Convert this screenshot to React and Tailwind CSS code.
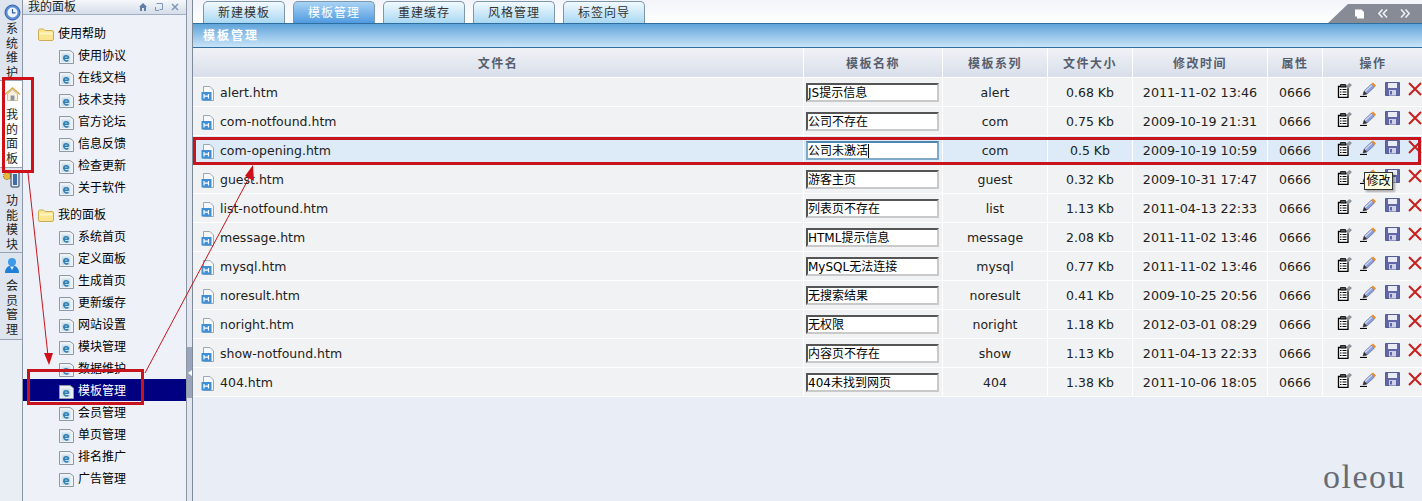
const cjk = "font-['Tahoma','DejaVu_Sans','Noto_Sans_CJK_SC',sans-serif]";

const railItems = [
  { key: 'clock', label: '系统维护', className: 'h-[81px] bg-[#dfe5ef]', textClass: 'pt-0' },
  { key: 'home', label: '我的面板', className: 'h-[87px] bg-white pt-[3px]', textClass: 'pt-[4px]' },
  { key: 'modules', label: '功能模块', className: 'h-[85px] bg-[#dfe5ef]', textClass: 'pt-[4px]' },
  { key: 'user', label: '会员管理', className: 'h-[87px] bg-[#dfe5ef]', textClass: 'pt-[4px]' },
];

const helpLinks = ['使用协议', '在线文档', '技术支持', '官方论坛', '信息反馈', '检查更新', '关于软件'];
const panelLinks = ['系统首页', '定义面板', '生成首页', '更新缓存', '网站设置', '模块管理', '数据维护', '模板管理', '会员管理', '单页管理', '排名推广', '广告管理'];
const tabs = ['新建模板', '模板管理', '重建缓存', '风格管理', '标签向导'];

const rows = [
  ['alert.htm', 'JS提示信息', 'alert', '0.68 Kb', '2011-11-02 13:46'],
  ['com-notfound.htm', '公司不存在', 'com', '0.75 Kb', '2009-10-19 21:31'],
  ['com-opening.htm', '公司未激活', 'com', '0.5 Kb', '2009-10-19 10:59'],
  ['guest.htm', '游客主页', 'guest', '0.32 Kb', '2009-10-31 17:47'],
  ['list-notfound.htm', '列表页不存在', 'list', '1.13 Kb', '2011-04-13 22:33'],
  ['message.htm', 'HTML提示信息', 'message', '2.08 Kb', '2011-11-02 13:46'],
  ['mysql.htm', 'MySQL无法连接', 'mysql', '0.77 Kb', '2011-11-02 13:46'],
  ['noresult.htm', '无搜索结果', 'noresult', '0.41 Kb', '2009-10-25 20:56'],
  ['noright.htm', '无权限', 'noright', '1.18 Kb', '2012-03-01 08:29'],
  ['show-notfound.htm', '内容页不存在', 'show', '1.13 Kb', '2011-04-13 22:33'],
  ['404.htm', '404未找到网页', '404', '1.38 Kb', '2011-10-06 18:05'],
];

const gridCols = 'grid grid-cols-[611px_139px_105px_85px_135px_55px_100px]';

function RailIcon({ name }) {
  if (name === 'clock') {
    return (
      <svg width="17" height="17" viewBox="0 0 17 17">
        <circle cx="8.5" cy="8.5" r="7.5" fill="#5d8fd6" stroke="#2f5ea8" />
        <circle cx="8.5" cy="8.5" r="5" fill="#eef4fc" />
        <path d="M8.5 5v3.8h3" fill="none" stroke="#2f5ea8" strokeWidth="1.2" />
      </svg>
    );
  }
  if (name === 'home') {
    return (
      <svg width="17" height="17" viewBox="0 0 17 17">
        <path d="M1 8.5 8.5 2 16 8.5" fill="none" stroke="#d9a94e" strokeWidth="1.6" />
        <path d="M3.5 8 8.5 3.8 13.5 8v6.5h-10z" fill="#f6f0dc" stroke="#b9a678" strokeWidth=".7" />
        <rect x="6.6" y="9.5" width="3.8" height="5" fill="#8a95a3" />
      </svg>
    );
  }
  if (name === 'modules') {
    return (
      <svg width="20" height="20" viewBox="0 0 20 20">
        <circle cx="5" cy="6" r="3.6" fill="#e6b93c" stroke="#8a6d1e" strokeDasharray="1.4 1" />
        <rect x="9" y="2" width="8" height="15" rx="1" fill="#dfe8f3" stroke="#26384f" />
        <rect x="11" y="4" width="4" height="11" fill="#3f6ea6" />
      </svg>
    );
  }
  return (
    <svg width="16" height="17" viewBox="0 0 16 17">
      <circle cx="8" cy="5" r="4" fill="#3d9be8" />
      <path d="M1 16c0-5 3-7.500 7-7.500s7 2.500 7 7.500z" fill="#1e7fd6" />
      <path d="M6 9.500 8 13l2-3.500z" fill="#e8f4fd" />
    </svg>
  );
}

function FolderIcon() {
  return (
    <svg width="16" height="13" viewBox="0 0 16 13" className="shrink-0">
      <path d="M.5 2.500Q.5 1 2 1h3.500L7 2.500h7Q15.500 2.500 15.500 4v7q0 1.500-1.500 1.500H2Q.5 12.500.5 11z" fill="#fbe68f" stroke="#c9ad55" />
      <path d="M1.500 4.500h13v2h-13z" fill="#fff5c2" />
    </svg>
  );
}

function PageIcon() {
  return (
    <svg width="15" height="15" viewBox="0 0 15 15" className="shrink-0">
      <path d="M.5 1.500h10.500l3.500 2.500v10.500H.5z" fill="#eef2f5" stroke="#8d99a3" />
      <rect x="2.500" y="4.500" width="9" height="8.500" fill="#cfe1ee" />
      <path d="M9.700 9.300H4.800c0-3.300 4.600-3.300 4.900 0 M9.400 11.300c-1.500 1.200-4.400.7-4.600-2" fill="none" stroke="#2e7fb0" strokeWidth="1.500" />
    </svg>
  );
}

function HtmIcon() {
  return (
    <svg width="14" height="15" viewBox="0 0 14 15" className="shrink-0">
      <path d="M2.500.5h6.500l3.500 3.500v10.500h-10z" fill="#f6f8fb" stroke="#9aa7b5" />
      <rect x=".5" y="6" width="10" height="8.500" fill="#3f8fd6" />
      <path d="M3 8v4.500M7.500 8v4.500M3 10.200h4.500" stroke="#fff" strokeWidth="1.200" />
    </svg>
  );
}

function TemplateIcon() {
  return (
    <svg width="15" height="15" viewBox="0 0 15 15" className="mt-[1px]">
      <path d="M1.500 3.500h9.500v11H1.500z" fill="#fff" stroke="#000" strokeWidth="1.300" />
      <path d="M3 6.500h1.500M5.500 6.500h4M3 9h1.500M5.500 9h4M3 11.500h1.500M5.500 11.500h4" stroke="#000" strokeWidth="1.200" />
      <path d="M3.500 4V1.500h5L9 4z" fill="#555" stroke="#000" strokeWidth=".8" />
      <path d="M9 3l3.500-3 2.500 2-4 4z" fill="#8d949c" />
    </svg>
  );
}

function PencilIcon() {
  return (
    <svg width="17" height="15" viewBox="0 0 17 15">
      <path d="M0 14.500h7" stroke="#000" strokeWidth="1.200" />
      <path d="M3 13l1.200-4L11.500 2l3 3L7 12z" fill="#8f9fd8" stroke="#55659f" strokeWidth=".7" />
      <path d="M4.800 9l6.700-6.200.8.800L5.500 10z" fill="#d4dbf4" />
      <path d="M11.500 2 13 .5l3 3L14.500 5z" fill="#f08a24" />
      <path d="M3 13l1.200-4L7 12z" fill="#3a2e22" />
    </svg>
  );
}

function SaveIcon() {
  return (
    <svg width="15" height="14" viewBox="0 0 15 14">
      <path d="M.5.500h14v13H.5z" fill="#6066a6" stroke="#565c98" />
      <rect x="3" y="1" width="9" height="5" fill="#e9ebf6" />
      <rect x="4" y="8" width="7" height="5.500" fill="#cfd2e6" />
      <rect x="5" y="9" width="2" height="3.500" fill="#6066a6" />
    </svg>
  );
}

function DeleteIcon() {
  return (
    <svg width="14" height="14" viewBox="0 0 14 14" className="shrink-0">
      <path d="M1 1l12 12M13 1 1 13" stroke="#c8201c" strokeWidth="2" />
    </svg>
  );
}

function TreeGroup({ title, links, className }) {
  return (
    <div className={className}>
      <div className="flex h-[22px] items-center gap-[4px] pl-[15px] pt-[2px] text-black">
        <FolderIcon />
        <span>{title}</span>
      </div>
      {links.map((link) => (
        <div
          key={link}
          className={`flex h-[22px] items-center gap-[4px] pl-[36px] pt-[2px] ${link === '模板管理' ? 'bg-[#000080] text-white' : 'text-black'}`}
        >
          <PageIcon />
          <span>{link}</span>
        </div>
      ))}
    </div>
  );
}

function Row({ row, active }) {
  const [file, name, series, size, time] = row;
  return (
    <div className={`${gridCols} h-[29px] border-b border-white text-[12.5px] text-[#222] ${active ? 'bg-[#dcebf7]' : 'bg-[#f1f2f3]'}`}>
      <div className="flex items-center gap-[5px] border-r border-white pl-[8px]">
        <span className="mt-[3px]"><HtmIcon /></span>
        <span className="pt-[2px]">{file}</span>
      </div>
      <div className="flex items-center border-r border-white pl-[2px]">
        <div
          className={`h-[19px] w-[133px] overflow-hidden bg-white text-[12px] leading-[16px] text-black ${active ? 'border-2 border-[#7fa9c9] border-t-[#4f86ad]' : 'border-2 border-[#c9c9c9] border-t-[#555] border-l-[#555]'}`}
        >
          {name}{active && <span className="border-r border-black" />}
        </div>
      </div>
      <div className="flex items-center justify-center border-r border-white pt-[2px]">{series}</div>
      <div className="flex items-center justify-center border-r border-white pt-[2px]">{size}</div>
      <div className="flex items-center justify-center border-r border-white pt-[2px] text-[12.7px]">{time}</div>
      <div className="flex items-center justify-center border-r border-white pt-[2px]">0666</div>
      <div className="flex items-start gap-[8px] pl-[14px] pt-[4px]">
        <TemplateIcon />
        <PencilIcon />
        <SaveIcon />
        <DeleteIcon />
      </div>
    </div>
  );
}

export default function App() {
  const headers = ['文件名', '模板名称', '模板系列', '文件大小', '修改时间', '属性', '操作'];

  return (
    <div className={`relative flex h-[501px] w-[1422px] overflow-hidden bg-[#e9eef6] text-[12px] ${cjk}`}>
      {/* left rail */}
      <div className="flex w-[22px] shrink-0 flex-col bg-[#e9edf4]">
        {railItems.map((item) => (
          <div key={item.key} className={`flex flex-col items-center border-b border-[#98a4b5] pl-[2px] pt-[2px] ${item.className}`}>
            <div className="flex h-[20px] items-center justify-center"><RailIcon name={item.key} /></div>
            <div className={`flex w-[14px] flex-col items-center text-[12px] leading-[14.500px] text-[#222] ${item.textClass}`}>
              {item.label.split('').map((ch, i) => <span key={i}>{ch}</span>)}
            </div>
          </div>
        ))}
      </div>

      {/* tree */}
      <div className="flex w-[165px] shrink-0 flex-col border-x border-[#8b96a6] bg-[#eff1f9]">
        <div className="flex h-[15px] items-center justify-between border-b border-[#9fb0c6] bg-gradient-to-b from-[#f5f7fb] to-[#d5dde9] pl-[5px] pr-[7px] text-[#222]">
          <span>我的面板</span>
          <div className="flex items-center gap-[8px]">
            <svg width="8" height="8" viewBox="0 0 8 8"><path d="M0 4 4 0l4 4H7v4H5V5H3v3H1V4z" fill="#5f7fa8" /></svg>
            <svg width="8" height="8" viewBox="0 0 8 8"><path d="M1.500.500h6v6h-3M.500 4v3.500H4" fill="none" stroke="#7e97b8" /></svg>
            <svg width="8" height="8" viewBox="0 0 8 8"><path d="M1 1l6 6M7 1 1 7" stroke="#7e97b8" strokeWidth="1.500" /></svg>
          </div>
        </div>
        <TreeGroup title="使用帮助" links={helpLinks} className="pt-[7px]" />
        <TreeGroup title="我的面板" links={panelLinks} className="pt-[5px]" />
      </div>

      {/* splitter */}
      <div className="flex w-[5px] shrink-0 flex-col bg-[#e3e6ee] pt-[347px]">
        <div className="flex h-[51px] items-center justify-center bg-[#9aa5bb]">
          <div className="h-0 w-0 border-y-[3px] border-r-[4px] border-y-transparent border-r-white" />
        </div>
      </div>

      {/* main */}
      <div className="flex min-w-0 flex-1 flex-col border-l border-[#7f8a99]">
        <div className="relative flex h-[23px] items-end gap-[8px] bg-gradient-to-b from-[#f3f4fa] to-white pl-[10px]">
          {tabs.map((tab) => (
            <div
              key={tab}
              className={`flex h-[22px] w-[82px] items-center justify-center rounded-t-[5px] border border-b-0 border-[#7d97ac] text-[12px] tracking-[1px] ${tab === '模板管理' ? 'bg-gradient-to-b from-[#a8d3f3] to-[#4f9ae0] text-white' : 'bg-gradient-to-b from-[#f2f9fe] to-[#a9d8f3] text-[#333]'}`}
            >
              {tab}
            </div>
          ))}
          <div className="absolute bottom-0 right-0 flex h-[19px] w-[94px] items-center bg-[#868b96] pl-[27px] [clip-path:polygon(20px_0,100%_0,100%_100%,0_100%)]">
            <svg width="9" height="10" viewBox="0 0 9 10">
              <path d="M0 .5h6.500L9 3v6.500H2v-2H0z" fill="#fff" />
            </svg>
            <svg width="10" height="9" viewBox="0 0 10 9" className="ml-[14px]">
              <path d="M4.500 .5.800 4.500l3.700 4M9 .5 5.300 4.500 9 8.500" fill="none" stroke="#eef0f5" strokeWidth="1.600" />
            </svg>
            <svg width="10" height="9" viewBox="0 0 10 9" className="ml-[12px]">
              <path d="M1 .5l3.700 4-3.700 4M5.500 .5l3.700 4-3.700 4" fill="none" stroke="#eef0f5" strokeWidth="1.600" />
            </svg>
          </div>
        </div>
        <div className="flex h-[25px] items-center border-y border-[#2f6f9f] bg-gradient-to-b from-[#5fa3da] to-[#c8e4f7] pl-[10px] text-[12px] font-bold tracking-[2px] text-white">
          模板管理
        </div>
        <div className={`${gridCols} h-[30px] border-b border-white bg-gradient-to-b from-[#f0f2f6] to-[#d8deea] text-[12px] font-bold tracking-[1.500px] text-[#555e6e]`}>
          {headers.map((h) => (
            <div key={h} className="flex items-center justify-center border-r border-white pt-[2px] last:border-r-0">{h}</div>
          ))}
        </div>
        {rows.map((row) => (
          <Row key={row[0]} row={row} active={row[0] === 'com-opening.htm'} />
        ))}
      </div>

      {/* tooltip over the row icons */}
      <div className="absolute left-[1364px] top-[172px] flex h-[18px] w-[29px] items-center justify-center border border-[#333] bg-[#ffffe1] text-[12px] text-black shadow-[2px_2px_2px_rgba(0,0,0,0.3)]">
        修改
      </div>

      {/* hand drawn annotations on top of the screenshot */}
      <div className="absolute left-[2px] top-[77px] h-[96px] w-[32px] border-[3px] border-[#d01018]" />
      <div className="absolute left-[27px] top-[369px] h-[36px] w-[117px] border-[3px] border-[#c8141c]" />
      <div className="absolute left-[193px] top-[137px] h-[28px] w-[1228px] border-[3px] border-[#c8141c]" />
      <svg className="pointer-events-none absolute left-0 top-0" width="1422" height="501" viewBox="0 0 1422 501">
        <path d="M28 173 48 356" stroke="#c8141c" fill="none" />
        <path d="M44 353h9l-4 12z" fill="#d01018" />
        <path d="M145 373 250 176" stroke="#c8141c" fill="none" />
        <path d="M253 165 254 181 245 176z" fill="#d01018" />
      </svg>

      <div className="absolute left-[1323px] top-[457px] font-['Liberation_Serif',serif] text-[34px] leading-[40px] tracking-[1.500px] text-[#666b73]">
        oleou
      </div>
    </div>
  );
}
